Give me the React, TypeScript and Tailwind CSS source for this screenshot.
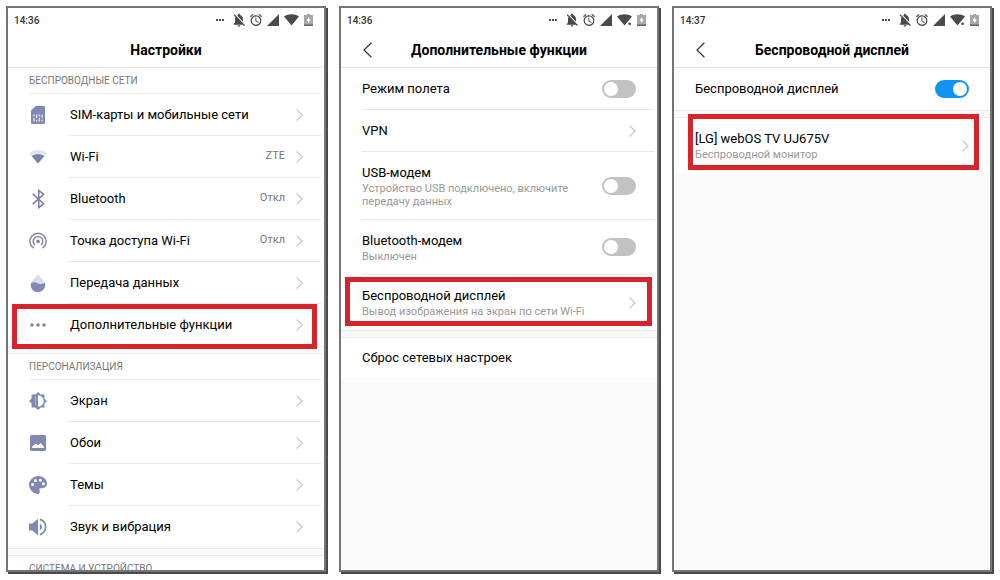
import type { ReactNode } from 'react';
import clsx from 'clsx';

/* ---------- Status bar icons ---------- */

const BellOffIcon = () => (
    <svg className="w-3 h-3.5" viewBox="3 2 18 20" fill="#4a4a4a">
        <path d="M20 18.69L7.84 6.14 5.27 3.49 4 4.76l2.8 2.8v.01c-.52.99-.8 2.16-.8 3.42v5l-2 2v1h13.73l2 2L21 19.72l-1-1.03zM12 22c1.11 0 2-.89 2-2h-4c0 1.11.89 2 2 2zm6-7.32V11c0-3.08-1.64-5.64-4.5-6.32V4c0-.83-.67-1.5-1.5-1.5s-1.5.67-1.5 1.5v.68c-.15.03-.29.08-.42.12-.1.03-.2.07-.3.11-.24.1-.47.22-.7.35L18 14.68z" />
    </svg>
);

const AlarmIcon = () => (
    <svg className="w-3 h-3" viewBox="2 2 20 20" fill="#4a4a4a">
        <path d="M22 5.72l-4.6-3.86-1.29 1.53 4.6 3.86L22 5.72zM7.88 3.39L6.6 1.86 2 5.71l1.29 1.53 4.59-3.85zM12.5 8H11v6l4.75 2.85.75-1.23-4-2.37V8zM12 4c-4.97 0-9 4.03-9 9s4.02 9 9 9a9 9 0 0 0 0-18zm0 16c-3.87 0-7-3.13-7-7s3.13-7 7-7 7 3.13 7 7-3.13 7-7 7z" />
    </svg>
);

const SignalIcon = () => (
    <svg className="w-3 h-3" viewBox="0 0 12 12" fill="#4a4a4a">
        <path d="M0 12L12 0v12z" />
    </svg>
);

const StatusWifiIcon = ({ notched }: { notched?: boolean }) => (
    <svg className="w-[15px] h-3" viewBox="0 0 14 12" preserveAspectRatio="none" fill="#4a4a4a">
        <path d="M0 2.6C4 -.4 10 -.4 14 2.6L7 11.5z" />
        {notched && (
            <>
                <path d="M8.6 12V9.7L11 7.4H14V12z" fill="#fff" />
                <circle cx="11.8" cy="9.8" r="1.3" />
            </>
        )}
    </svg>
);

const BatteryIcon = () => (
    <svg className="w-[9px] h-3" viewBox="0 0 9 12">
        <path d="M3 0h3v1h3v11H0V1h3z" fill="#a6a6a6" />
        <path d="M0 10.5h9V12H0z" fill="#666" />
        <path d="M5.2 2.8L2.4 6.7h1.8V9.4L6.8 5.6H5.2z" fill="#fff" />
    </svg>
);

const Chevron = () => (
    <svg className="w-[7px] h-3 shrink-0" viewBox="0 0 7 12" fill="none" stroke="#c4c4c4" strokeWidth="1.2">
        <path d="M.6.6L6.2 6 .6 11.4" />
    </svg>
);

/* ---------- Settings icons ---------- */

const SimIcon = () => (
    <svg className="w-3.5 h-[18px]" viewBox="0 0 14 18">
        <path d="M4.5 0H13a1 1 0 0 1 1 1v16a1 1 0 0 1-1 1H1a1 1 0 0 1-1-1V4.5z" fill="#8388b2" />
        <path d="M3 8.5v2M3 12v3.5M5.7 8.5V12M5.7 13.7v1.8M8.4 8.5v1.8M8.4 11.8v3.7M11.1 8.5V12M11.1 13.7v1.8" stroke="#e4e5f1" strokeWidth="1.3" />
    </svg>
);

const WifiIcon = () => (
    <svg className="w-[18px] h-[14px]" viewBox="0 0 18 14">
        <path d="M0 3.4C5 -1 13 -1 18 3.4L9 13.5z" fill="#e2e3ee" />
        <path d="M2.6 6C6.5 3.6 11.5 3.6 15.4 6L9 13.5z" fill="#7d82a4" />
    </svg>
);

const BluetoothIcon = () => (
    <svg className="w-[13px] h-5" viewBox="0 0 13 20" fill="none" stroke="#7d82a4" strokeWidth="1.6">
        <path d="M.7 4.8L11.6 14.6 6.7 18.6V1.4L11.6 5.4.7 15.2" />
    </svg>
);

const HotspotIcon = () => (
    <svg className="w-[18px] h-[18px]" viewBox="0 0 18 18" fill="none" stroke="#858aa8" strokeWidth="1.5">
        <path d="M4.6 16.2A8.1 8.1 0 1 1 13.4 16.2" />
        <path d="M6 13A4.8 4.8 0 1 1 12 13" />
        <circle cx="9" cy="9.4" r="1.8" fill="#7d82a4" stroke="none" />
    </svg>
);

const DropIcon = () => (
    <svg className="w-4 h-[18px]" viewBox="0 0 16 18">
        <path d="M8 0C10 3.6 15.2 6.8 15.2 11A7.2 7 0 0 1 .8 11C.8 6.8 6 3.6 8 0z" fill="#dadce8" />
        <path d="M.9 9.4C3.5 7.6 5.5 8.4 8 9.4 10.5 10.4 12.8 10.2 15 8.8 16 14.4 12.4 18 8 18 3.4 18 .2 14.5.9 9.4z" fill="#8388b2" />
    </svg>
);

const DotsIcon = () => (
    <svg className="w-4 h-1" viewBox="0 0 16 4" fill="#858799">
        <circle cx="2" cy="2" r="1.8" />
        <circle cx="8" cy="2" r="1.8" />
        <circle cx="14" cy="2" r="1.8" />
    </svg>
);

const BrightnessIcon = () => (
    <svg className="w-[18px] h-[18px]" viewBox="0 0 18 18">
        <path d="M9 0l2.6 2.6h3.8v3.8L18 9l-2.6 2.6v3.8h-3.8L9 18l-2.6-2.6H2.6v-3.8L0 9l2.6-2.6V2.6h3.8z" fill="#8388b2" />
        <path d="M9 3.2a5.8 5.8 0 0 1 0 11.6z" fill="#fff" />
        <path d="M6.6 4.4v9.2" stroke="#b4b7d0" strokeWidth="1" />
    </svg>
);

const WallpaperIcon = () => (
    <svg className="w-4 h-4" viewBox="0 0 16 16">
        <rect width="16" height="16" rx="1.4" fill="#8388b2" />
        <path d="M2.2 13V11.6L5.8 8.4 8 10.6 10.6 8 13.8 11.4V13z" fill="#fff" />
    </svg>
);

const ThemesIcon = () => (
    <svg className="w-[18px] h-[18px]" viewBox="0 0 18 18">
        <path d="M9 0C14 0 18 3.4 18 7.6c0 2.8-2.2 4.6-5 4.6h-1.6c-1 0-1.3.8-.9 1.7.5 1.1.6 4.1-1.5 4.1A9 9 0 0 1 9 0z" fill="#8388b2" />
        <g fill="#fff">
            <circle cx="3.6" cy="8.4" r="1.5" />
            <circle cx="6.4" cy="4.4" r="1.5" />
            <circle cx="11.4" cy="4.2" r="1.5" />
            <circle cx="14.4" cy="7.8" r="1.5" />
        </g>
    </svg>
);

const SoundIcon = () => (
    <svg className="w-[18px] h-[18px]" viewBox="0 0 18 18">
        <path d="M0 5.6h3.4L9 .8v16.4l-5.6-4.8H0z" fill="#8388b2" />
        <path d="M10.8 1.4a7.9 7.9 0 0 1 0 15.2" fill="none" stroke="#858aa8" strokeWidth="1.7" />
        <path d="M10.8 5.4a4 4 0 0 1 0 7.2z" fill="#8388b2" />
    </svg>
);

/* ---------- Building blocks ---------- */

interface ScreenProps {
    time: string;
    title: string;
    back?: boolean;
    children: ReactNode;
}

function Screen({ time, title, back, children }: ScreenProps) {
    return (
        <section className="flex-1 min-w-0 flex flex-col overflow-hidden border-2 border-[#757575] bg-[#fafafa] shadow-[2px_2px_0_#4a4a4a]">
            {/* Status bar */}
            <div className="h-6 shrink-0 flex items-center bg-white pl-1.5 pr-[11px]">
                <span className="flex-1 text-[10px] font-medium text-[#333]">{time}</span>
                <div className="flex items-center gap-[5px]">
                    <svg className="w-2 h-0.5 mr-1" viewBox="0 0 8 2" fill="#4a4a4a">
                        <path d="M0 0h2v2H0zM3 0h2v2H3zM6 0h2v2H6z" />
                    </svg>
                    <BellOffIcon />
                    <AlarmIcon />
                    <SignalIcon />
                    <StatusWifiIcon notched={back} />
                    <BatteryIcon />
                </div>
            </div>

            {/* Header */}
            <header className="h-9 shrink-0 grid grid-cols-[40px_1fr_40px] items-center bg-white border-b border-[#e4e4e4]">
                {back ? (
                    <button type="button" aria-label="Назад" className="pl-[22px]">
                        <svg className="w-[9px] h-4" viewBox="0 0 9 16" fill="none" stroke="#333" strokeWidth="1.2">
                            <path d="M8.4.8L1 8l7.4 7.2" />
                        </svg>
                    </button>
                ) : (
                    <span />
                )}
                <h1 className="text-center text-sm font-bold whitespace-nowrap">{title}</h1>
            </header>

            {children}
        </section>
    );
}

function SectionTitle({ children }: { children: ReactNode }) {
    return (
        <div className="h-[26px] shrink-0 bg-white pl-[21px] pr-[3px]">
            <h2 className="h-full flex items-center border-b border-[#ebebeb] text-[10px] text-[#777]">
                {children}
            </h2>
        </div>
    );
}

const Gap = () => <div className="h-2 shrink-0 border-y border-[#ececec] bg-[#fafafa]" />;

const Highlight = ({ className }: { className: string }) => (
    <span className={clsx('absolute z-10 border-[5px] border-[#d8232a] pointer-events-none', className)} />
);

interface MenuRowProps {
    icon: ReactNode;
    label: string;
    value?: string;
    last?: boolean;
    highlight?: string;
}

function MenuRow({ icon, label, value, last, highlight }: MenuRowProps) {
    return (
        <button type="button" className="relative h-[42px] shrink-0 w-full flex bg-white pl-[21px] pr-[3px] text-left">
            <span className="w-[18px] h-full flex items-center justify-center mr-[21px]">{icon}</span>
            <span
                className={clsx(
                    'flex-1 h-full flex items-center gap-[11px] pl-0.5 pr-[18px]',
                    !last && 'border-b border-[#e8e8e8]'
                )}
            >
                <span className="flex-1 text-[13px] text-black">{label}</span>
                {value && <span className="text-[11px] text-[#777]">{value}</span>}
                <Chevron />
            </span>
            {highlight && <Highlight className={highlight} />}
        </button>
    );
}

interface OptionRowProps {
    label: string;
    hint?: string;
    toggle?: boolean;
    checked?: boolean;
    arrow?: boolean;
    last?: boolean;
    height: string;
    highlight?: string;
}

function OptionRow({ label, hint, toggle, checked, arrow, last, height, highlight }: OptionRowProps) {
    const Tag = toggle ? 'label' : 'button';

    return (
        <Tag className={clsx('relative shrink-0 w-full block bg-white pl-[21px] pr-[3px] text-left', height)}>
            <span
                className={clsx(
                    'h-full flex items-center justify-between pr-[18px]',
                    !last && 'border-b border-[#e8e8e8]'
                )}
            >
                <span className="max-w-[230px]">
                    <span className="block text-[13px] leading-[18px] text-black">{label}</span>
                    {hint && <span className="block text-[11px] leading-[13px] text-[#999]">{hint}</span>}
                </span>
                {toggle && (
                    <input
                        type="checkbox"
                        role="switch"
                        defaultChecked={checked}
                        className="appearance-none w-[34px] h-[18px] shrink-0 flex items-center rounded-full bg-[#c2c2c2] px-0.5 before:block before:size-3.5 before:rounded-full before:bg-white checked:bg-[#1093f5] checked:before:ml-auto"
                    />
                )}
                {arrow && <Chevron />}
            </span>
            {highlight && <Highlight className={highlight} />}
        </Tag>
    );
}

/* ---------- Page ---------- */

export default function App() {
    return (
        <main className="h-screen flex gap-[13px] bg-white pt-1.5 pb-2 pl-1.5 pr-2 font-['Roboto','Noto_Sans',sans-serif]">
            <Screen time="14:36" title="Настройки">
                <SectionTitle>БЕСПРОВОДНЫЕ СЕТИ</SectionTitle>
                <MenuRow icon={<SimIcon />} label="SIM-карты и мобильные сети" />
                <MenuRow icon={<WifiIcon />} label="Wi-Fi" value="ZTE" />
                <MenuRow icon={<BluetoothIcon />} label="Bluetooth" value="Откл" />
                <MenuRow icon={<HotspotIcon />} label="Точка доступа Wi-Fi" value="Откл" />
                <MenuRow icon={<DropIcon />} label="Передача данных" />
                <MenuRow
                    icon={<DotsIcon />}
                    label="Дополнительные функции"
                    last
                    highlight="top-0 -bottom-[3px] left-1 right-[7px]"
                />
                <Gap />
                <SectionTitle>ПЕРСОНАЛИЗАЦИЯ</SectionTitle>
                <MenuRow icon={<BrightnessIcon />} label="Экран" />
                <MenuRow icon={<WallpaperIcon />} label="Обои" />
                <MenuRow icon={<ThemesIcon />} label="Темы" />
                <MenuRow icon={<SoundIcon />} label="Звук и вибрация" last />
                <Gap />
                <SectionTitle>СИСТЕМА И УСТРОЙСТВО</SectionTitle>
            </Screen>

            <Screen time="14:36" title="Дополнительные функции" back>
                <OptionRow label="Режим полета" toggle height="h-[42px]" />
                <OptionRow label="VPN" arrow height="h-[42px]" />
                <OptionRow
                    label="USB-модем"
                    hint="Устройство USB подключено, включите передачу данных"
                    toggle
                    height="h-[68px]"
                />
                <OptionRow label="Bluetooth-модем" hint="Выключен" toggle height="h-[55px]" />
                <OptionRow
                    label="Беспроводной дисплей"
                    hint="Вывод изображения на экран по сети Wi-Fi"
                    arrow
                    last
                    height="h-[55px]"
                    highlight="top-0.5 bottom-1 left-1 right-[5px]"
                />
                <Gap />
                <OptionRow label="Сброс сетевых настроек" last height="h-10" />
            </Screen>

            <Screen time="14:37" title="Беспроводной дисплей" back>
                <OptionRow label="Беспроводной дисплей" toggle checked last height="h-[42px]" />
                <Gap />
                <OptionRow
                    label="[LG] webOS TV UJ675V"
                    hint="Беспроводной монитор"
                    arrow
                    last
                    height="h-[55px]"
                    highlight="-top-1 bottom-[3px] left-3.5 right-[11px]"
                />
            </Screen>
        </main>
    );
}
